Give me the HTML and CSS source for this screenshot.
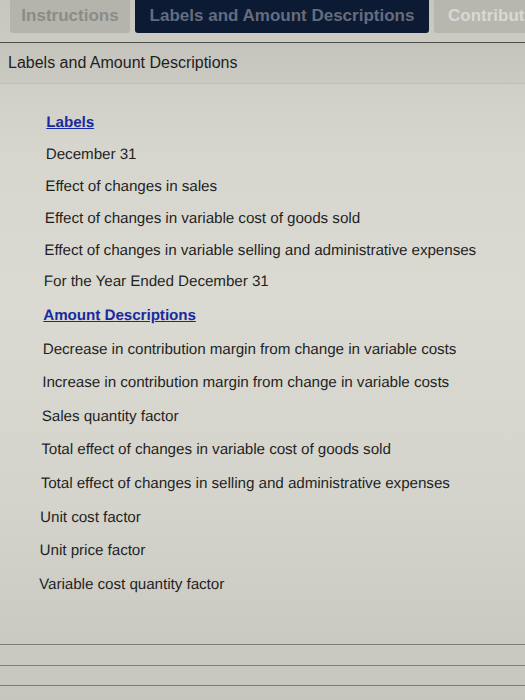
FILE: index.html
```html
<!DOCTYPE html>
<html>
<head>
<meta charset="utf-8">
<link rel="stylesheet" href="styles.css">
</head>
<body>
<div class="screen">
  <div class="tabs">
    <div class="tab tab-inst">Instructions</div>
    <div class="tab tab-active">Labels and Amount Descriptions</div>
    <div class="tab tab-next">Contribut</div>
  </div>
  <div class="rule"></div>
  <div class="heading">Labels and Amount Descriptions</div>
  <div class="content">
    <div class="row tight link">Labels</div>
    <div class="row tight">December 31</div>
    <div class="row tight">Effect of changes in sales</div>
    <div class="row tight">Effect of changes in variable cost of goods sold</div>
    <div class="row tight">Effect of changes in variable selling and administrative expenses</div>
    <div class="row">For the Year Ended December 31</div>
    <div class="row link">Amount Descriptions</div>
    <div class="row">Decrease in contribution margin from change in variable costs</div>
    <div class="row">Increase in contribution margin from change in variable costs</div>
    <div class="row">Sales quantity factor</div>
    <div class="row">Total effect of changes in variable cost of goods sold</div>
    <div class="row">Total effect of changes in selling and administrative expenses</div>
    <div class="row">Unit cost factor</div>
    <div class="row">Unit price factor</div>
    <div class="row">Variable cost quantity factor</div>
  </div>
  <div class="bottom">
    <div class="bline b1"></div>
    <div class="bline b2"></div>
    <div class="bline b3"></div>
  </div>
</div>
</body>
</html>
```
FILE: styles.css
```css
html, body {
  margin: 0;
  padding: 0;
}
body {
  width: 525px;
  height: 700px;
  overflow: hidden;
  font-family: "Liberation Sans", Arial, sans-serif;
  background: #cfcfc7;
}
.screen {
  width: 525px;
  height: 700px;
  display: flex;
  flex-direction: column;
  background: linear-gradient(180deg, #c6c6be 0px, #cdcdc5 60px, #d6d6ce 150px, #dadad2 300px, #d4d4cc 500px, #c6c6be 700px);
}
.tabs {
  display: flex;
  height: 33px;
  gap: 5px;
  padding-left: 10px;
  align-items: stretch;
}
.tab {
  font-weight: bold;
  font-size: 17px;
  display: flex;
  align-items: center;
  border-radius: 0 0 3px 3px;
  padding-bottom: 2px;
  white-space: nowrap;
  overflow: hidden;
}
.tab-inst {
  width: 120px;
  justify-content: center;
  background: #b4b4ad;
  color: #8b8b88;
}
.tab-active {
  width: 294px;
  justify-content: center;
  background: #0d1a33;
  color: #656c7e;
}
.tab-next {
  flex: 1;
  padding-left: 14px;
  background: #b7b7b0;
  color: #d9d9d4;
  border-radius: 0 0 0 3px;
}
.rule {
  margin-top: 9px;
  height: 1px;
  background: #4c4c48;
}
.heading {
  height: 40px;
  padding-left: 8px;
  font-size: 16px;
  color: #1e1e1e;
  display: flex;
  align-items: center;
  background: linear-gradient(180deg, #c4c4bc, #cacac2);
  border-bottom: 1px solid #c0c0b8;
}
.content {
  padding-top: 28px;
  padding-left: 47px;
  transform: skewX(-0.9deg);
  transform-origin: 0 0;
}
.row {
  height: 33.6px;
  font-size: 15.1px;
  color: #1f1f1f;
  line-height: 20px;
}
.row.tight {
  height: 31.9px;
}
.link {
  color: #1a2a9e;
  font-weight: bold;
  text-decoration: underline;
}
.bottom {
  margin-top: auto;
  height: 70px;
  position: relative;
}
.bline {
  height: 1px;
  background: #5e5e58;
  opacity: 0.7;
}
.b1 { margin-top: 14px; }
.b2 { margin-top: 20px; }
.b3 { margin-top: 19px; }
```
